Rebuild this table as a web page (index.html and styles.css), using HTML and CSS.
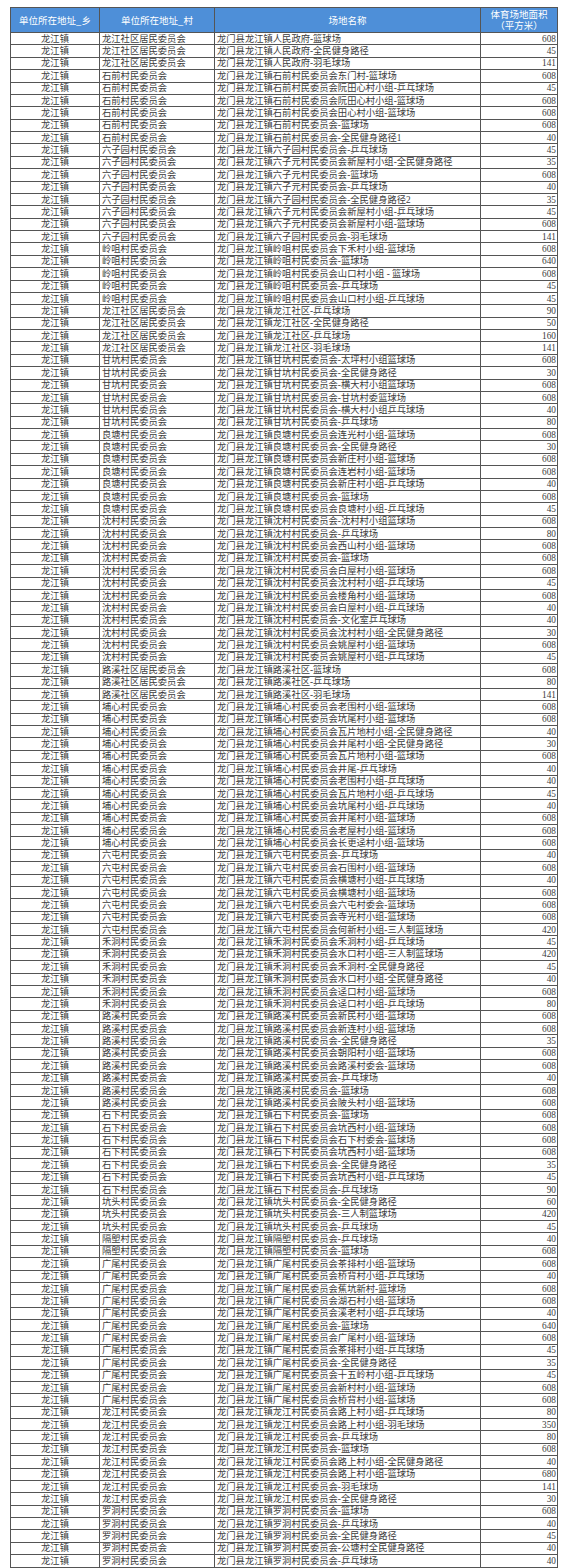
FILE: index.html
```html
<!DOCTYPE html>
<html lang="zh-CN">
<head>
<meta charset="utf-8">
<title>龙江镇体育场地</title>
<link rel="stylesheet" href="styles.css">
</head>
<body>
<table class="sheet">
<colgroup><col class="c1"><col class="c2"><col class="c3"><col class="c4"></colgroup>
<thead>
<tr class="head"><th>单位所在地址_乡</th><th>单位所在地址_村</th><th>场地名称</th><th>体育场地面积<br>（平方米）</th></tr>
</thead>
<tbody>
<tr><td>龙江镇</td><td>龙江社区居民委员会</td><td>龙门县龙江镇人民政府-篮球场</td><td>608</td></tr>
<tr><td>龙江镇</td><td>龙江社区居民委员会</td><td>龙门县龙江镇人民政府-全民健身路径</td><td>45</td></tr>
<tr><td>龙江镇</td><td>龙江社区居民委员会</td><td>龙门县龙江镇人民政府-羽毛球场</td><td>141</td></tr>
<tr><td>龙江镇</td><td>石前村民委员会</td><td>龙门县龙江镇石前村民委员会东门村-篮球场</td><td>608</td></tr>
<tr><td>龙江镇</td><td>石前村民委员会</td><td>龙门县龙江镇石前村民委员会阮田心村小组-乒乓球场</td><td>45</td></tr>
<tr><td>龙江镇</td><td>石前村民委员会</td><td>龙门县龙江镇石前村民委员会阮田心村小组-篮球场</td><td>608</td></tr>
<tr><td>龙江镇</td><td>石前村民委员会</td><td>龙门县龙江镇石前村民委员会田心村小组-篮球场</td><td>608</td></tr>
<tr><td>龙江镇</td><td>石前村民委员会</td><td>龙门县龙江镇石前村民委员会-篮球场</td><td>608</td></tr>
<tr><td>龙江镇</td><td>石前村民委员会</td><td>龙门县龙江镇石前村民委员会-全民健身路径1</td><td>40</td></tr>
<tr><td>龙江镇</td><td>六子园村民委员会</td><td>龙门县龙江镇六子园村民委员会-乒乓球场</td><td>45</td></tr>
<tr><td>龙江镇</td><td>六子园村民委员会</td><td>龙门县龙江镇六子元村民委员会新屋村小组-全民健身路径</td><td>35</td></tr>
<tr><td>龙江镇</td><td>六子园村民委员会</td><td>龙门县龙江镇六子元村民委员会-篮球场</td><td>608</td></tr>
<tr><td>龙江镇</td><td>六子园村民委员会</td><td>龙门县龙江镇六子元村民委员会-乒乓球场</td><td>40</td></tr>
<tr><td>龙江镇</td><td>六子园村民委员会</td><td>龙门县龙江镇六子园村民委员会-全民健身路径2</td><td>35</td></tr>
<tr><td>龙江镇</td><td>六子园村民委员会</td><td>龙门县龙江镇六子元村民委员会新屋村小组-乒乓球场</td><td>45</td></tr>
<tr><td>龙江镇</td><td>六子园村民委员会</td><td>龙门县龙江镇六子元村民委员会新屋村小组-篮球场</td><td>608</td></tr>
<tr><td>龙江镇</td><td>六子园村民委员会</td><td>龙门县龙江镇六子园村民委员会-羽毛球场</td><td>141</td></tr>
<tr><td>龙江镇</td><td>岭咀村民委员会</td><td>龙门县龙江镇岭咀村民委员会下禾村小组-篮球场</td><td>608</td></tr>
<tr><td>龙江镇</td><td>岭咀村民委员会</td><td>龙门县龙江镇岭咀村民委员会-篮球场</td><td>640</td></tr>
<tr><td>龙江镇</td><td>岭咀村民委员会</td><td>龙门县龙江镇岭咀村民委员会山口村小组 - 篮球场</td><td>608</td></tr>
<tr><td>龙江镇</td><td>岭咀村民委员会</td><td>龙门县龙江镇岭咀村民委员会-乒乓球场</td><td>45</td></tr>
<tr><td>龙江镇</td><td>岭咀村民委员会</td><td>龙门县龙江镇岭咀村民委员会山口村小组-乒乓球场</td><td>45</td></tr>
<tr><td>龙江镇</td><td>龙江社区居民委员会</td><td>龙门县龙江镇龙江社区-乒乓球场</td><td>90</td></tr>
<tr><td>龙江镇</td><td>龙江社区居民委员会</td><td>龙门县龙江镇龙江社区-全民健身路径</td><td>50</td></tr>
<tr><td>龙江镇</td><td>龙江社区居民委员会</td><td>龙门县龙江镇龙江社区-乒乓球场</td><td>160</td></tr>
<tr><td>龙江镇</td><td>龙江社区居民委员会</td><td>龙门县龙江镇龙江社区-羽毛球场</td><td>141</td></tr>
<tr><td>龙江镇</td><td>甘坑村民委员会</td><td>龙门县龙江镇甘坑村民委员会-太坪村小组篮球场</td><td>608</td></tr>
<tr><td>龙江镇</td><td>甘坑村民委员会</td><td>龙门县龙江镇甘坑村民委员会-全民健身路径</td><td>30</td></tr>
<tr><td>龙江镇</td><td>甘坑村民委员会</td><td>龙门县龙江镇甘坑村民委员会-横大村小组篮球场</td><td>608</td></tr>
<tr><td>龙江镇</td><td>甘坑村民委员会</td><td>龙门县龙江镇甘坑村民委员会-甘坑村委篮球场</td><td>608</td></tr>
<tr><td>龙江镇</td><td>甘坑村民委员会</td><td>龙门县龙江镇甘坑村民委员会-横大村小组乒乓球场</td><td>40</td></tr>
<tr><td>龙江镇</td><td>甘坑村民委员会</td><td>龙门县龙江镇甘坑村民委员会-乒乓球场</td><td>80</td></tr>
<tr><td>龙江镇</td><td>良塘村民委员会</td><td>龙门县龙江镇良塘村民委员会连光村小组-篮球场</td><td>608</td></tr>
<tr><td>龙江镇</td><td>良塘村民委员会</td><td>龙门县龙江镇良塘村民委员会-全民健身路径</td><td>30</td></tr>
<tr><td>龙江镇</td><td>良塘村民委员会</td><td>龙门县龙江镇良塘村民委员会新庄村小组-篮球场</td><td>608</td></tr>
<tr><td>龙江镇</td><td>良塘村民委员会</td><td>龙门县龙江镇良塘村民委员会连岩村小组-篮球场</td><td>608</td></tr>
<tr><td>龙江镇</td><td>良塘村民委员会</td><td>龙门县龙江镇良塘村民委员会新庄村小组-乒乓球场</td><td>40</td></tr>
<tr><td>龙江镇</td><td>良塘村民委员会</td><td>龙门县龙江镇良塘村民委员会-篮球场</td><td>608</td></tr>
<tr><td>龙江镇</td><td>良塘村民委员会</td><td>龙门县龙江镇良塘村民委员会良塘村小组-乒乓球场</td><td>45</td></tr>
<tr><td>龙江镇</td><td>沈村村民委员会</td><td>龙门县龙江镇沈村村民委员会-沈村村小组篮球场</td><td>608</td></tr>
<tr><td>龙江镇</td><td>沈村村民委员会</td><td>龙门县龙江镇沈村村民委员会-乒乓球场</td><td>80</td></tr>
<tr><td>龙江镇</td><td>沈村村民委员会</td><td>龙门县龙江镇沈村村民委员会西山村小组-篮球场</td><td>608</td></tr>
<tr><td>龙江镇</td><td>沈村村民委员会</td><td>龙门县龙江镇沈村村民委员会-篮球场</td><td>608</td></tr>
<tr><td>龙江镇</td><td>沈村村民委员会</td><td>龙门县龙江镇沈村村民委员会白屋村小组-篮球场</td><td>608</td></tr>
<tr><td>龙江镇</td><td>沈村村民委员会</td><td>龙门县龙江镇沈村村民委员会沈村村小组-乒乓球场</td><td>45</td></tr>
<tr><td>龙江镇</td><td>沈村村民委员会</td><td>龙门县龙江镇沈村村民委员会楼角村小组-篮球场</td><td>608</td></tr>
<tr><td>龙江镇</td><td>沈村村民委员会</td><td>龙门县龙江镇沈村村民委员会白屋村小组-乒乓球场</td><td>40</td></tr>
<tr><td>龙江镇</td><td>沈村村民委员会</td><td>龙门县龙江镇沈村村民委员会-文化室乒乓球场</td><td>40</td></tr>
<tr><td>龙江镇</td><td>沈村村民委员会</td><td>龙门县龙江镇沈村村民委员会沈村村小组-全民健身路径</td><td>30</td></tr>
<tr><td>龙江镇</td><td>沈村村民委员会</td><td>龙门县龙江镇沈村村民委员会姚屋村小组-篮球场</td><td>608</td></tr>
<tr><td>龙江镇</td><td>沈村村民委员会</td><td>龙门县龙江镇沈村村民委员会姚屋村小组-乒乓球场</td><td>45</td></tr>
<tr><td>龙江镇</td><td>路溪社区居民委员会</td><td>龙门县龙江镇路溪社区-篮球场</td><td>608</td></tr>
<tr><td>龙江镇</td><td>路溪社区居民委员会</td><td>龙门县龙江镇路溪社区-乒乓球场</td><td>80</td></tr>
<tr><td>龙江镇</td><td>路溪社区居民委员会</td><td>龙门县龙江镇路溪社区-羽毛球场</td><td>141</td></tr>
<tr><td>龙江镇</td><td>埔心村民委员会</td><td>龙门县龙江镇埔心村民委员会老围村小组-篮球场</td><td>608</td></tr>
<tr><td>龙江镇</td><td>埔心村民委员会</td><td>龙门县龙江镇埔心村民委员会坑尾村小组-篮球场</td><td>608</td></tr>
<tr><td>龙江镇</td><td>埔心村民委员会</td><td>龙门县龙江镇埔心村民委员会瓦片地村小组-全民健身路径</td><td>40</td></tr>
<tr><td>龙江镇</td><td>埔心村民委员会</td><td>龙门县龙江镇埔心村民委员会井尾村小组-全民健身路径</td><td>30</td></tr>
<tr><td>龙江镇</td><td>埔心村民委员会</td><td>龙门县龙江镇埔心村民委员会瓦片地村小组-篮球场</td><td>608</td></tr>
<tr><td>龙江镇</td><td>埔心村民委员会</td><td>龙门县龙江镇埔心村民委员会井尾-乒乓球场</td><td>40</td></tr>
<tr><td>龙江镇</td><td>埔心村民委员会</td><td>龙门县龙江镇埔心村民委员会老围村小组-乒乓球场</td><td>40</td></tr>
<tr><td>龙江镇</td><td>埔心村民委员会</td><td>龙门县龙江镇埔心村民委员会瓦片地村小组-乒乓球场</td><td>45</td></tr>
<tr><td>龙江镇</td><td>埔心村民委员会</td><td>龙门县龙江镇埔心村民委员会坑尾村小组-乒乓球场</td><td>40</td></tr>
<tr><td>龙江镇</td><td>埔心村民委员会</td><td>龙门县龙江镇埔心村民委员会井尾村小组-篮球场</td><td>608</td></tr>
<tr><td>龙江镇</td><td>埔心村民委员会</td><td>龙门县龙江镇埔心村民委员会老屋村小组-篮球场</td><td>608</td></tr>
<tr><td>龙江镇</td><td>埔心村民委员会</td><td>龙门县龙江镇埔心村民委员会长更迳村小组-篮球场</td><td>608</td></tr>
<tr><td>龙江镇</td><td>六屯村民委员会</td><td>龙门县龙江镇六屯村民委员会-乒乓球场</td><td>40</td></tr>
<tr><td>龙江镇</td><td>六屯村民委员会</td><td>龙门县龙江镇六屯村民委员会石围村小组-篮球场</td><td>608</td></tr>
<tr><td>龙江镇</td><td>六屯村民委员会</td><td>龙门县龙江镇六屯村民委员会横塘村小组-乒乓球场</td><td>40</td></tr>
<tr><td>龙江镇</td><td>六屯村民委员会</td><td>龙门县龙江镇六屯村民委员会横塘村小组-篮球场</td><td>608</td></tr>
<tr><td>龙江镇</td><td>六屯村民委员会</td><td>龙门县龙江镇六屯村民委员会六屯村委会-篮球场</td><td>608</td></tr>
<tr><td>龙江镇</td><td>六屯村民委员会</td><td>龙门县龙江镇六屯村民委员会寺光村小组-篮球场</td><td>608</td></tr>
<tr><td>龙江镇</td><td>六屯村民委员会</td><td>龙门县龙江镇六屯村民委员会何新村小组-三人制篮球场</td><td>420</td></tr>
<tr><td>龙江镇</td><td>禾洞村民委员会</td><td>龙门县龙江镇禾洞村民委员会禾洞村小组-乒乓球场</td><td>45</td></tr>
<tr><td>龙江镇</td><td>禾洞村民委员会</td><td>龙门县龙江镇禾洞村民委员会水口村小组-三人制篮球场</td><td>420</td></tr>
<tr><td>龙江镇</td><td>禾洞村民委员会</td><td>龙门县龙江镇禾洞村民委员会禾洞村-全民健身路径</td><td>45</td></tr>
<tr><td>龙江镇</td><td>禾洞村民委员会</td><td>龙门县龙江镇禾洞村民委员会水口村小组-全民健身路径</td><td>40</td></tr>
<tr><td>龙江镇</td><td>禾洞村民委员会</td><td>龙门县龙江镇禾洞村民委员会迳口村小组-篮球场</td><td>608</td></tr>
<tr><td>龙江镇</td><td>禾洞村民委员会</td><td>龙门县龙江镇禾洞村民委员会迳口村小组-乒乓球场</td><td>80</td></tr>
<tr><td>龙江镇</td><td>路溪村民委员会</td><td>龙门县龙江镇路溪村民委员会新民村小组-篮球场</td><td>608</td></tr>
<tr><td>龙江镇</td><td>路溪村民委员会</td><td>龙门县龙江镇路溪村民委员会新连村小组-篮球场</td><td>608</td></tr>
<tr><td>龙江镇</td><td>路溪村民委员会</td><td>龙门县龙江镇路溪村民委员会-全民健身路径</td><td>35</td></tr>
<tr><td>龙江镇</td><td>路溪村民委员会</td><td>龙门县龙江镇路溪村民委员会朝阳村小组-篮球场</td><td>608</td></tr>
<tr><td>龙江镇</td><td>路溪村民委员会</td><td>龙门县龙江镇路溪村民委员会路溪村委会-篮球场</td><td>608</td></tr>
<tr><td>龙江镇</td><td>路溪村民委员会</td><td>龙门县龙江镇路溪村民委员会-乒乓球场</td><td>40</td></tr>
<tr><td>龙江镇</td><td>路溪村民委员会</td><td>龙门县龙江镇路溪村民委员会-篮球场</td><td>608</td></tr>
<tr><td>龙江镇</td><td>路溪村民委员会</td><td>龙门县龙江镇路溪村民委员会陂头村小组-篮球场</td><td>608</td></tr>
<tr><td>龙江镇</td><td>石下村民委员会</td><td>龙门县龙江镇石下村民委员会-篮球场</td><td>608</td></tr>
<tr><td>龙江镇</td><td>石下村民委员会</td><td>龙门县龙江镇石下村民委员会坑西村小组-篮球场</td><td>608</td></tr>
<tr><td>龙江镇</td><td>石下村民委员会</td><td>龙门县龙江镇石下村民委员会石下村委会-篮球场</td><td>608</td></tr>
<tr><td>龙江镇</td><td>石下村民委员会</td><td>龙门县龙江镇石下村民委员会坑西村小组-篮球场</td><td>608</td></tr>
<tr><td>龙江镇</td><td>石下村民委员会</td><td>龙门县龙江镇石下村民委员会-全民健身路径</td><td>35</td></tr>
<tr><td>龙江镇</td><td>石下村民委员会</td><td>龙门县龙江镇石下村民委员会坑西村小组-乒乓球场</td><td>45</td></tr>
<tr><td>龙江镇</td><td>石下村民委员会</td><td>龙门县龙江镇石下村民委员会-乒乓球场</td><td>90</td></tr>
<tr><td>龙江镇</td><td>坑头村民委员会</td><td>龙门县龙江镇坑头村民委员会-全民健身路径</td><td>60</td></tr>
<tr><td>龙江镇</td><td>坑头村民委员会</td><td>龙门县龙江镇坑头村民委员会-三人制篮球场</td><td>420</td></tr>
<tr><td>龙江镇</td><td>坑头村民委员会</td><td>龙门县龙江镇坑头村民委员会-乒乓球场</td><td>45</td></tr>
<tr><td>龙江镇</td><td>隔塱村民委员会</td><td>龙门县龙江镇隔塱村民委员会-乒乓球场</td><td>40</td></tr>
<tr><td>龙江镇</td><td>隔塱村民委员会</td><td>龙门县龙江镇隔塱村民委员会-篮球场</td><td>608</td></tr>
<tr><td>龙江镇</td><td>广尾村民委员会</td><td>龙门县龙江镇广尾村民委员会茶排村小组-篮球场</td><td>608</td></tr>
<tr><td>龙江镇</td><td>广尾村民委员会</td><td>龙门县龙江镇广尾村民委员会桥背村小组-乒乓球场</td><td>40</td></tr>
<tr><td>龙江镇</td><td>广尾村民委员会</td><td>龙门县龙江镇广尾村民委员会蕉坑新村-篮球场</td><td>608</td></tr>
<tr><td>龙江镇</td><td>广尾村民委员会</td><td>龙门县龙江镇广尾村民委员会湖石村小组-篮球场</td><td>608</td></tr>
<tr><td>龙江镇</td><td>广尾村民委员会</td><td>龙门县龙江镇广尾村民委员会溪老村小组-乒乓球场</td><td>40</td></tr>
<tr><td>龙江镇</td><td>广尾村民委员会</td><td>龙门县龙江镇广尾村民委员会-篮球场</td><td>640</td></tr>
<tr><td>龙江镇</td><td>广尾村民委员会</td><td>龙门县龙江镇广尾村民委员会广尾村小组-篮球场</td><td>608</td></tr>
<tr><td>龙江镇</td><td>广尾村民委员会</td><td>龙门县龙江镇广尾村民委员会茶排村小组-乒乓球场</td><td>45</td></tr>
<tr><td>龙江镇</td><td>广尾村民委员会</td><td>龙门县龙江镇广尾村民委员会-全民健身路径</td><td>35</td></tr>
<tr><td>龙江镇</td><td>广尾村民委员会</td><td>龙门县龙江镇广尾村民委员会十五岭村小组-乒乓球场</td><td>45</td></tr>
<tr><td>龙江镇</td><td>广尾村民委员会</td><td>龙门县龙江镇广尾村民委员会新村村小组-篮球场</td><td>608</td></tr>
<tr><td>龙江镇</td><td>广尾村民委员会</td><td>龙门县龙江镇广尾村民委员会桥背村小组-篮球场</td><td>608</td></tr>
<tr><td>龙江镇</td><td>龙江村民委员会</td><td>龙门县龙江镇龙江村民委员会路上村小组-乒乓球场</td><td>80</td></tr>
<tr><td>龙江镇</td><td>龙江村民委员会</td><td>龙门县龙江镇龙江村民委员会路上村小组-羽毛球场</td><td>350</td></tr>
<tr><td>龙江镇</td><td>龙江村民委员会</td><td>龙门县龙江镇龙江村民委员会-乒乓球场</td><td>80</td></tr>
<tr><td>龙江镇</td><td>龙江村民委员会</td><td>龙门县龙江镇龙江村民委员会-篮球场</td><td>608</td></tr>
<tr><td>龙江镇</td><td>龙江村民委员会</td><td>龙门县龙江镇龙江村民委员会路上村小组-全民健身路径</td><td>40</td></tr>
<tr><td>龙江镇</td><td>龙江村民委员会</td><td>龙门县龙江镇龙江村民委员会路上村小组-篮球场</td><td>680</td></tr>
<tr><td>龙江镇</td><td>龙江村民委员会</td><td>龙门县龙江镇龙江村民委员会-羽毛球场</td><td>141</td></tr>
<tr><td>龙江镇</td><td>龙江村民委员会</td><td>龙门县龙江镇龙江村民委员会-全民健身路径</td><td>30</td></tr>
<tr><td>龙江镇</td><td>罗洞村民委员会</td><td>龙门县龙江镇罗洞村民委员会-篮球场</td><td>608</td></tr>
<tr><td>龙江镇</td><td>罗洞村民委员会</td><td>龙门县龙江镇罗洞村民委员会-乒乓球场</td><td>40</td></tr>
<tr><td>龙江镇</td><td>罗洞村民委员会</td><td>龙门县龙江镇罗洞村民委员会-全民健身路径</td><td>45</td></tr>
<tr><td>龙江镇</td><td>罗洞村民委员会</td><td>龙门县龙江镇罗洞村民委员会-公塘村全民健身路径</td><td>40</td></tr>
<tr><td>龙江镇</td><td>罗洞村民委员会</td><td>龙门县龙江镇罗洞村民委员会-乒乓球场</td><td>40</td></tr>
</tbody>
</table>
</body>
</html>
```
FILE: styles.css
```css
html, body {
  margin: 0;
  padding: 0;
  background: #ffffff;
}
body {
  padding: 7px 0 0 10px;
}
.sheet {
  width: 547px;
  table-layout: fixed;
  border-collapse: collapse;
  font-family: "Liberation Serif", "Noto Sans CJK SC", serif;
  font-size: 9.3px;
  color: #3c3c3c;
}
.c1 { width: 89px; }
.c2 { width: 115px; }
.c3 { width: 266px; }
.c4 { width: 77px; }
.sheet th {
  background: #4e8fd8;
  color: #ffffff;
  font-family: "Noto Sans CJK SC", sans-serif;
  font-weight: normal;
  font-size: 9.5px;
  line-height: 11px;
  height: 24px;
  padding: 0;
  border: 1px solid #555555;
  text-align: center;
  vertical-align: middle;
}
.sheet tbody tr {
  height: 12.38px;
}
.sheet td {
  padding: 0 1px 0 2px;
  line-height: 10px;
  border: 1px solid #555555;
  white-space: nowrap;
  overflow: hidden;
  vertical-align: middle;
}
.sheet td:first-child {
  text-align: center;
  padding: 0;
}
.sheet td:last-child {
  text-align: right;
  padding: 0 1px 0 0;
}
```
